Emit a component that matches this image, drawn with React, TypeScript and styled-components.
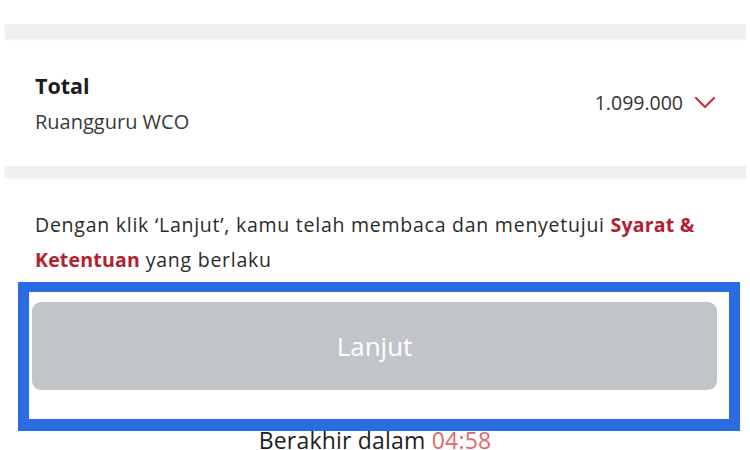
import React from 'react'
import styled, { createGlobalStyle } from 'styled-components'

const GlobalStyle = createGlobalStyle`
  html, body {
    margin: 0;
    padding: 0;
    background: #ffffff;
    font-family: 'Open Sans', 'Noto Sans', sans-serif;
    overflow: hidden;
  }
`

const Page = styled.div`
  display: flex;
  flex-direction: column;
  width: 750px;
  height: 450px;
  overflow: hidden;
  background: #ffffff;

  & > * {
    flex-shrink: 0;
  }
`

const TopSpace = styled.div`
  height: 24px;
`

const Divider = styled.div<{ $h: number }>`
  height: ${p => p.$h}px;
  margin: 0 4px 0 5px;
  background: #efeff2;
  box-shadow: 0 1px 2px rgba(0, 0, 0, 0.04);
`

const TotalRow = styled.div`
  display: flex;
  align-items: center;
  justify-content: space-between;
  height: 127px;
  padding: 0 34px 0 35px;
`

const TotalLabels = styled.div`
  display: flex;
  flex-direction: column;
  gap: 8px;
  margin-top: 3px;
`

const TotalTitle = styled.div`
  font-size: 21.5px;
  line-height: 28px;
  font-weight: 700;
  color: #1c1c1c;
`

const TotalSub = styled.div`
  font-size: 20px;
  line-height: 28px;
  color: #3a3a3a;
`

const Price = styled.div`
  display: flex;
  align-items: center;
  gap: 11px;
  font-size: 19.5px;
  color: #333333;
`

const Terms = styled.p`
  margin: 29px 0 0;
  padding: 0 35px;
  font-size: 19.5px;
  letter-spacing: 0.75px;
  line-height: 35px;
  color: #2b2b2b;
`

const TermsLink = styled.span`
  color: #b3202f;
  font-weight: 700;
  letter-spacing: 0.2px;
`

const Highlight = styled.div`
  margin: 5px 10px 0 18px;
  border: 11px solid #2b6ce2;
  border-top-width: 10px;
  border-bottom-width: 12px;
  padding: 10px 12px 29px 3px;
  background: #ffffff;
`

const Button = styled.button`
  display: flex;
  align-items: center;
  justify-content: center;
  width: 100%;
  height: 88px;
  border: none;
  border-radius: 9px;
  background: #c1c4c8;
  color: #ffffff;
  font-family: inherit;
  font-size: 26px;
  font-weight: 400;
`

const Countdown = styled.div`
  text-align: center;
  font-size: 23px;
  letter-spacing: 0.2px;
  line-height: 30px;
  color: #1e1e1e;
  margin-top: -6px;
`

const Time = styled.span`
  color: #df6a6a;
`

const Chevron = () => (
  <svg width="22" height="14" viewBox="0 0 22 14" fill="none">
    <path d="M2 2 L11 11 L20 2" stroke="#c8303c" strokeWidth="2.2" strokeLinecap="round" strokeLinejoin="round" />
  </svg>
)

export default function App() {
  return (
    <Page>
      <GlobalStyle />
      <TopSpace />
      <Divider $h={15} />
      <TotalRow>
        <TotalLabels>
          <TotalTitle>Total</TotalTitle>
          <TotalSub>Ruangguru WCO</TotalSub>
        </TotalLabels>
        <Price>
          1.099.000
          <Chevron />
        </Price>
      </TotalRow>
      <Divider $h={12} />
      <Terms>
        Dengan klik ‘Lanjut’, kamu telah membaca dan menyetujui <TermsLink>Syarat &amp; Ketentuan</TermsLink> yang berlaku
      </Terms>
      <Highlight>
        <Button>Lanjut</Button>
      </Highlight>
      <Countdown>
        Berakhir dalam <Time>04:58</Time>
      </Countdown>
    </Page>
  )
}
